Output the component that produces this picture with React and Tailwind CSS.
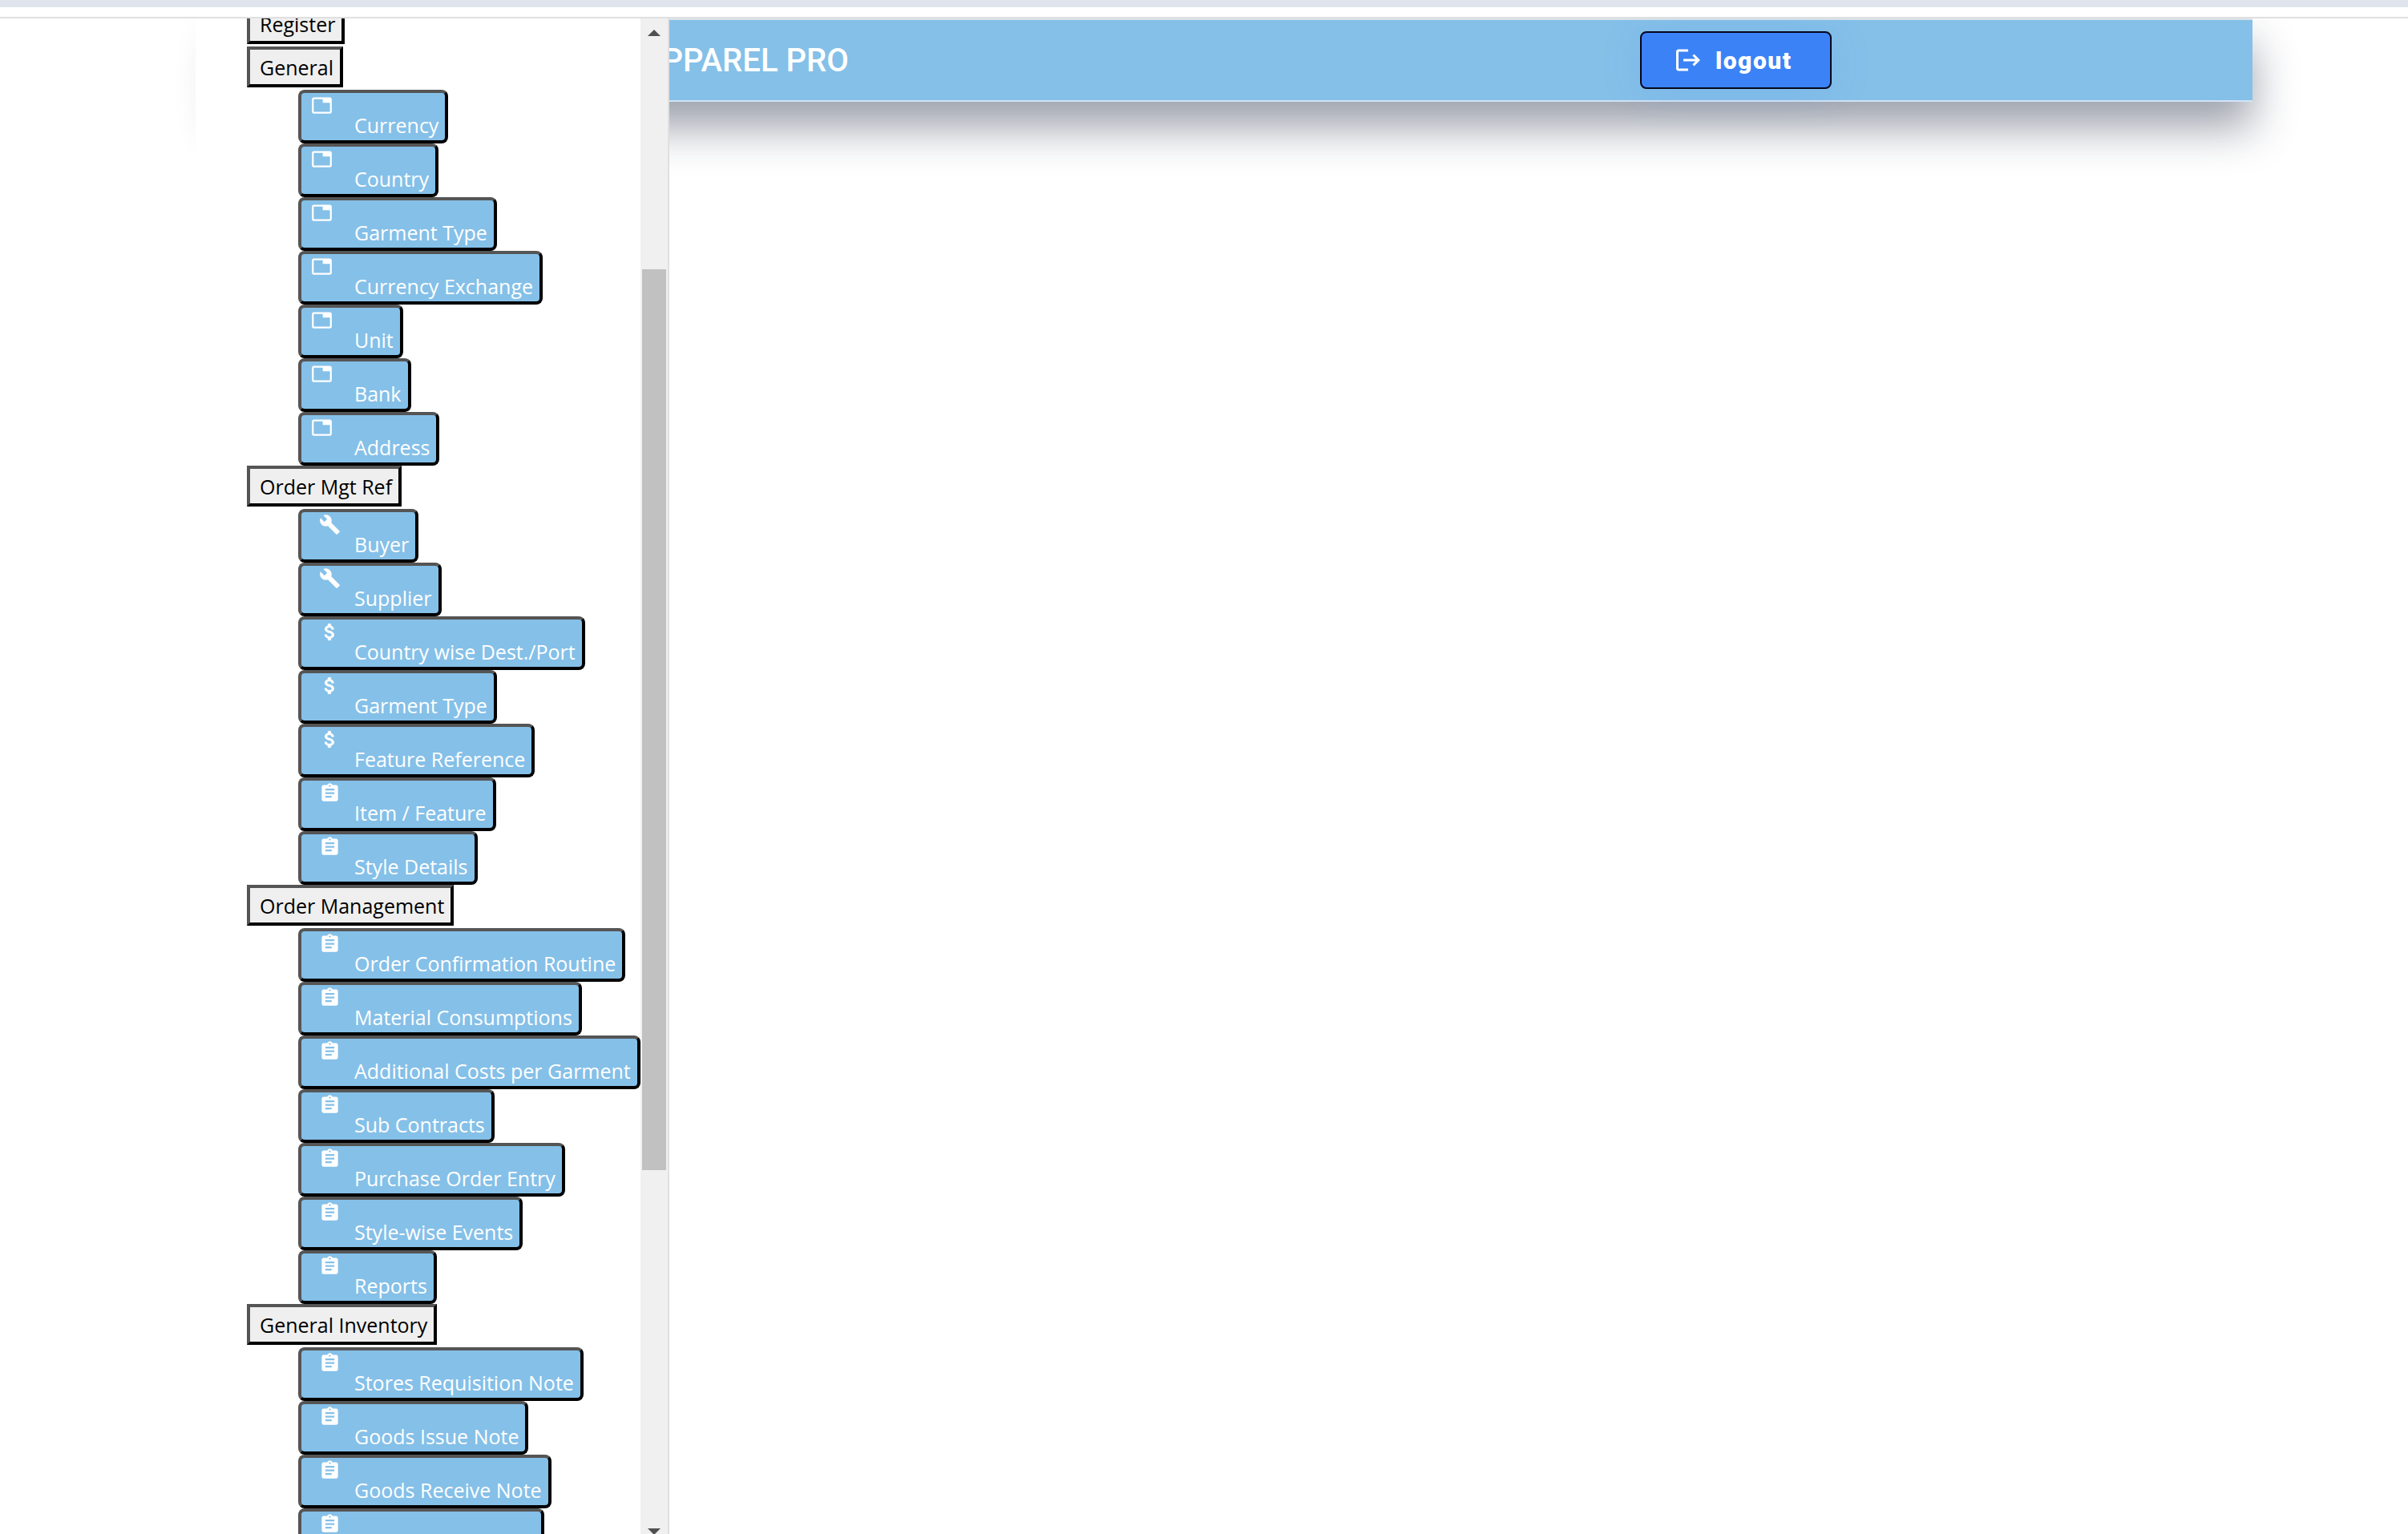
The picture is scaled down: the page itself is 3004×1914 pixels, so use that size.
import React from "react";
import { MdTab, MdBuild, MdAssignment, MdLogout } from "react-icons/md";

function DollarIcon({ className }) {
  return (
    <svg className={className} viewBox="0 0 24 24" fill="currentColor" stroke="currentColor" strokeWidth="0.7">
      <path d="M11.8 10.9c-2.27-.59-3-1.2-3-2.15 0-1.09 1.01-1.85 2.7-1.85 1.78 0 2.44.85 2.5 2.1h2.21c-.07-1.72-1.12-3.3-3.21-3.81V3h-3v2.16c-1.94.42-3.5 1.68-3.5 3.61 0 2.31 1.91 3.46 4.7 4.13 2.5.6 3 1.48 3 2.41 0 .69-.49 1.79-2.7 1.79-2.06 0-2.87-.92-2.98-2.1h-2.2c.12 2.19 1.76 3.42 3.68 3.83V21h3v-2.15c1.95-.37 3.5-1.5 3.5-3.55 0-2.84-2.43-3.81-4.7-4.4z" />
    </svg>
  );
}

const groups = [
  { title: "Register", items: [] },
  {
    title: "General",
    items: [
      ["Currency", MdTab],
      ["Country", MdTab],
      ["Garment Type", MdTab],
      ["Currency Exchange", MdTab],
      ["Unit", MdTab],
      ["Bank", MdTab],
      ["Address", MdTab],
    ],
  },
  {
    title: "Order Mgt Ref",
    items: [
      ["Buyer", MdBuild],
      ["Supplier", MdBuild],
      ["Country wise Dest./Port", DollarIcon],
      ["Garment Type", DollarIcon],
      ["Feature Reference", DollarIcon],
      ["Item / Feature", MdAssignment],
      ["Style Details", MdAssignment],
    ],
  },
  {
    title: "Order Management",
    items: [
      ["Order Confirmation Routine", MdAssignment],
      ["Material Consumptions", MdAssignment],
      ["Additional Costs per Garment", MdAssignment],
      ["Sub Contracts", MdAssignment],
      ["Purchase Order Entry", MdAssignment],
      ["Style-wise Events", MdAssignment],
      ["Reports", MdAssignment],
    ],
  },
  {
    title: "General Inventory",
    items: [
      ["Stores Requisition Note", MdAssignment],
      ["Goods Issue Note", MdAssignment],
      ["Goods Receive Note", MdAssignment],
      ["Goods Return Note", MdAssignment],
    ],
  },
];

const bevel =
  "border-4 border-t-[#555555] border-l-[#555555] border-r-black border-b-black whitespace-nowrap pl-3 pr-2";

function NavItem({ label, Icon }) {
  return (
    <li className="flex">
      <button className={`${bevel} flex h-[67px] shrink-0 items-start rounded-lg bg-[#85c0e8] py-0.5 text-white`}>
        <span className={`w-[54px] shrink-0 ${Icon === MdTab ? "" : "pl-2.5"}`}>
          <Icon className="size-[27px]" />
        </span>
        <span className="self-end leading-[34px]">{label}</span>
      </button>
    </li>
  );
}

function Scrollbar() {
  return (
    <div className="flex w-[34px] shrink-0 flex-col items-center bg-[#f0f0f0]" aria-hidden="true">
      <svg className="mt-3.5 mb-3 h-2 w-4 shrink-0" viewBox="0 0 16 8" fill="#505050">
        <path d="M8 0 16 8H0z" />
      </svg>
      <div className="flex-[279]" />
      <div className="w-[30px] flex-[1124] bg-[#c1c1c1]" />
      <div className="flex-[447]" />
      <div className="h-[7px] shrink-0 overflow-hidden">
        <svg className="h-2 w-4" viewBox="0 0 16 8" fill="#505050">
          <path d="M0 0H16L8 8z" />
        </svg>
      </div>
    </div>
  );
}

export default function App() {
  return (
    <div className="flex h-screen flex-col overflow-hidden bg-white">
      <div className="h-[9px] shrink-0 bg-[#e0e4ec]" />
      <div className="h-3.5 shrink-0 border-b-2 border-[#e0e0e0]" />
      <div className="relative min-h-0 flex-1 overflow-hidden pr-[194px] pl-[280px]">
        <header className="flex h-[104px] items-center border-y-2 border-t-[#d8e3e8] border-b-[#d3e3f5] bg-[#85c0e8] pr-[525px] pl-[520px] font-[Roboto,sans-serif] text-white shadow-[0_32px_54px_0_rgba(25,38,60,0.43)]">
          <h1 className="pt-0.5 text-[40px] font-medium whitespace-nowrap">APPAREL PRO</h1>
          <button className="ml-auto flex h-[72px] w-[239px] items-center gap-4 rounded-lg border-2 border-[#06061c] bg-[#3b82f6] pl-10 text-[30px] font-black tracking-wider shadow-[0_4px_50px_0_rgba(59,130,246,0.15)]">
            <MdLogout className="size-9" />
            logout
          </button>
        </header>

        <aside className="absolute inset-y-0 left-[244px] flex w-[591px] border-r-2 border-[#e0e0e0] bg-white font-['Open_Sans',sans-serif] text-[25px]">
          <nav className="min-w-0 flex-1 overflow-hidden pl-16">
            <div className="-mt-[19px]">
              {groups.map((group) => (
                <section key={group.title}>
                  <button className={`${bevel} mb-[3px] flex h-[51px] items-center bg-[#efefef] pt-0.5 text-black`}>
                    {group.title}
                  </button>
                  <ul className="pl-16">
                    {group.items.map(([label, Icon]) => (
                      <NavItem key={label} label={label} Icon={Icon} />
                    ))}
                  </ul>
                </section>
              ))}
            </div>
          </nav>
          <Scrollbar />
        </aside>
      </div>
    </div>
  );
}
